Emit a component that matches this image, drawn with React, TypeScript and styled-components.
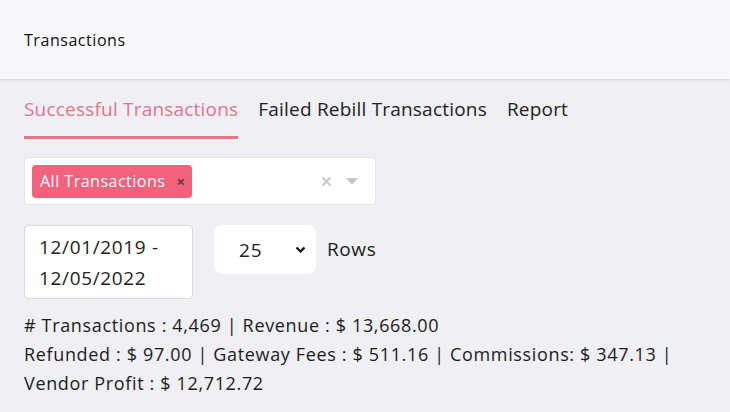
import React from "react";
import styled, { createGlobalStyle } from "styled-components";

const GlobalStyle = createGlobalStyle`
  body {
    margin: 0;
    background: #efeff4;
    font-family: "Open Sans", "Noto Sans", sans-serif;
    color: #222;
  }
`;

const Page = styled.div`
  width: 730px;
  height: 412px;
  overflow: hidden;
  background: #efeff4;
`;

const Header = styled.header`
  height: 79px;
  background: #f8f8fb;
  box-shadow: 0 1px 3px rgba(0, 0, 0, 0.12);
  display: flex;
  align-items: center;
  padding: 0 24px;
  font-size: 16px;
  letter-spacing: 0.55px;
  color: #111;
`;

const Body = styled.main`
  padding: 0 24px;
`;

const Tabs = styled.nav`
  display: flex;
  gap: 20px;
  margin-top: 16px;
`;

const Tab = styled.div<{ $active?: boolean }>`
  font-size: 19px;
  letter-spacing: 0.2px;
  line-height: 28px;
  padding-bottom: 13px;
  color: ${({ $active }) => ($active ? "#e8738a" : "#222")};
  border-bottom: 3px solid ${({ $active }) => ($active ? "#e8738a" : "transparent")};
`;

const MultiSelect = styled.div`
  margin-top: 18px;
  width: 352px;
  height: 48px;
  box-sizing: border-box;
  background: #fff;
  border: 1px solid #e2e2e8;
  border-radius: 4px;
  display: flex;
  align-items: center;
  padding: 0 7px;
`;

const Chip = styled.div`
  display: flex;
  align-items: center;
  gap: 11px;
  height: 33px;
  padding: 0 7px 0 8px;
  background: #f2627c;
  color: #fff;
  border-radius: 4px;
  font-size: 16px;
  letter-spacing: 0.5px;
`;

const ChipRemove = styled.span`
  color: #5a3a3a;
  font-size: 15px;
  font-weight: 700;
`;

const Indicators = styled.div`
  margin-left: auto;
  display: flex;
  align-items: center;
  gap: 14px;
  padding-right: 10px;
`;

const Controls = styled.div`
  display: flex;
  align-items: flex-start;
  margin-top: 20px;
`;

const DateBox = styled.div`
  width: 169px;
  height: 74px;
  box-sizing: border-box;
  background: #fff;
  border: 1px solid #d8d8de;
  border-radius: 4px;
  padding: 6px 14px;
  font-size: 19px;
  letter-spacing: 0.65px;
  line-height: 31px;
`;

const RowsSelect = styled.div`
  margin-left: 21px;
  width: 102px;
  height: 49px;
  background: #fff;
  border-radius: 8px;
  display: flex;
  align-items: center;
  padding: 0 10px 0 25px;
  box-sizing: border-box;
  font-size: 19px;
  letter-spacing: 0.8px;
`;

const RowsLabel = styled.span`
  margin-left: 11px;
  font-size: 19px;
  letter-spacing: 0.6px;
  line-height: 49px;
`;

const Stats = styled.div`
  margin-top: 12px;
  font-size: 18px;
  letter-spacing: 0.65px;
  line-height: 29px;
  color: #1c1c1c;
  white-space: nowrap;
`;

export default function App() {
  return (
    <Page>
      <GlobalStyle />
      <Header>Transactions</Header>
      <Body>
        <Tabs>
          <Tab $active>Successful Transactions</Tab>
          <Tab>Failed Rebill Transactions</Tab>
          <Tab>Report</Tab>
        </Tabs>
        <MultiSelect>
          <Chip>
            All Transactions
            <ChipRemove>×</ChipRemove>
          </Chip>
          <Indicators>
            <svg width="11" height="11" viewBox="0 0 11 11">
              <path d="M1.5 1.5l8 8M9.5 1.5l-8 8" stroke="#c8c8cc" strokeWidth="1.8" />
            </svg>
            <svg width="12" height="7" viewBox="0 0 12 7">
              <path d="M0 0h12L6 7z" fill="#c8c8cc" />
            </svg>
          </Indicators>
        </MultiSelect>
        <Controls>
          <DateBox>
            12/01/2019 -<br />
            12/05/2022
          </DateBox>
          <RowsSelect>
            25
            <svg style={{ marginLeft: "auto" }} width="11" height="8" viewBox="0 0 11 8">
              <path d="M1.5 1.5l4 4 4-4" fill="none" stroke="#111" strokeWidth="2.2" />
            </svg>
          </RowsSelect>
          <RowsLabel>Rows</RowsLabel>
        </Controls>
        <Stats>
          # Transactions : 4,469 | Revenue : $ 13,668.00
          <br />
          Refunded : $ 97.00 | Gateway Fees : $ 511.16 | Commissions: $ 347.13 |
          <br />
          Vendor Profit : $ 12,712.72
        </Stats>
      </Body>
    </Page>
  );
}
